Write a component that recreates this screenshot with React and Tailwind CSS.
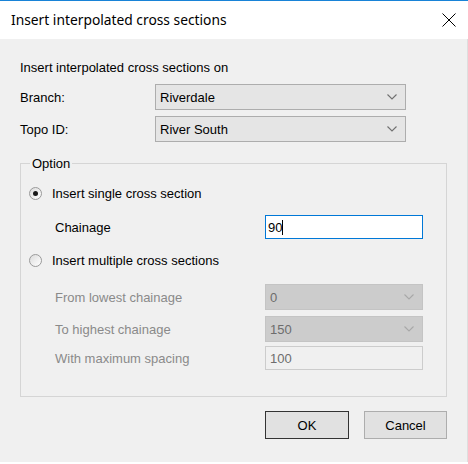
const body = { fontFamily: '"Liberation Sans", Arial, sans-serif' };

function Chevron({ color = "#606060" }) {
  return (
    <svg width="10" height="6" viewBox="0 0 10 6" className="shrink-0">
      <path d="M0.5 0.5 L5 5 L9.5 0.5" fill="none" stroke={color} strokeWidth="1.1" />
    </svg>
  );
}

function Combo({ value, disabled, className = "" }) {
  return (
    <div
      className={
        "flex h-[26px] items-center justify-between border pl-[4px] pr-[8px] " +
        (disabled
          ? "border-[#c4c4c4] bg-[#cccccc] text-[#6d6d6d] "
          : "border-[#adadad] bg-[#e5e5e5] text-black ") +
        className
      }
    >
      <span>{value}</span>
      <Chevron color={disabled ? "#a8a8a8" : "#707070"} />
    </div>
  );
}

function Radio({ checked }) {
  return (
    <span className="flex h-[13px] w-[13px] items-center justify-center rounded-full border border-[#9a9a9a] bg-gradient-to-br from-[#dcdcdc] to-white">
      {checked && <span className="h-[5px] w-[5px] rounded-full bg-[#1a1a1a]" />}
    </span>
  );
}

export default function App() {
  return (
    <div className="flex h-[464px] w-[468px] flex-col bg-white" style={body}>
      <div className="h-[1px] bg-[#1883d7]" />
      <div className="flex h-[38px] items-center justify-between pl-[11px] pr-[12px]">
        <span className="text-[13.8px] text-black" style={{ fontFamily: '"Noto Sans", sans-serif' }}>
          Insert interpolated cross sections
        </span>
        <svg width="14" height="14" viewBox="0 0 14 14">
          <path d="M0.5 0.5 L13.5 13.5 M13.5 0.5 L0.5 13.5" stroke="#000" strokeWidth="1" />
        </svg>
      </div>

      <div className="flex flex-1 flex-col border-r border-[#dedede] bg-[#f0f0f0] pl-[20px] pr-[20px] text-[13px] leading-[15px] text-black">
        <div className="mt-[21px] h-[15px]">Insert interpolated cross sections on</div>

        <div className="mt-[9px] flex h-[26px] items-center">
          <span className="w-[135px]">Branch:</span>
          <Combo value="Riverdale" className="w-[251px]" />
        </div>
        <div className="mt-[6px] flex h-[26px] items-center">
          <span className="w-[135px]">Topo ID:</span>
          <Combo value="River South" className="w-[251px]" />
        </div>

        <fieldset className="mt-[14px] border border-[#d5d5d5] pb-[26px] pl-[8px] pr-[23px]">
          <legend className="ml-[1px] px-[2px]">Option</legend>

          <div className="mt-[12px] flex h-[20px] items-center gap-[10px]">
            <Radio checked />
            <span>Insert single cross section</span>
          </div>

          <div className="mt-[12px] flex h-[24px] items-center">
            <span className="w-[236px] pl-[26px]">Chainage</span>
            <div className="flex h-[24px] flex-1 items-center border border-[#0078d7] bg-white pl-[2px]">
              <span>90</span>
              <span className="h-[15px] w-[1px] bg-black" />
            </div>
          </div>

          <div className="mt-[11px] flex h-[20px] items-center gap-[10px]">
            <Radio />
            <span>Insert multiple cross sections</span>
          </div>

          <div className="mt-[14px] flex h-[26px] items-center text-[#8a8a8a]">
            <span className="w-[236px] pl-[26px]">From lowest chainage</span>
            <Combo value="0" disabled className="flex-1" />
          </div>
          <div className="mt-[6px] flex h-[26px] items-center text-[#8a8a8a]">
            <span className="w-[236px] pl-[26px]">To highest chainage</span>
            <Combo value="150" disabled className="flex-1" />
          </div>
          <div className="mt-[4px] flex h-[24px] items-center text-[#8a8a8a]">
            <span className="w-[236px] pl-[26px]">With maximum spacing</span>
            <div className="flex h-[24px] flex-1 items-center border border-[#cccccc] bg-[#f0f0f0] pl-[4px] text-[#6d6d6d]">
              100
            </div>
          </div>
        </fieldset>

        <div className="mt-[14px] flex justify-end gap-[15px]">
          <button className="h-[28px] w-[84px] border border-[#333333] bg-[#e1e1e1] text-[13px]" style={body}>
            OK
          </button>
          <button className="h-[28px] w-[83px] border border-[#adadad] bg-[#e1e1e1] text-[13px]" style={body}>
            Cancel
          </button>
        </div>
      </div>
      <div className="h-[2px] bg-white" />
    </div>
  );
}
